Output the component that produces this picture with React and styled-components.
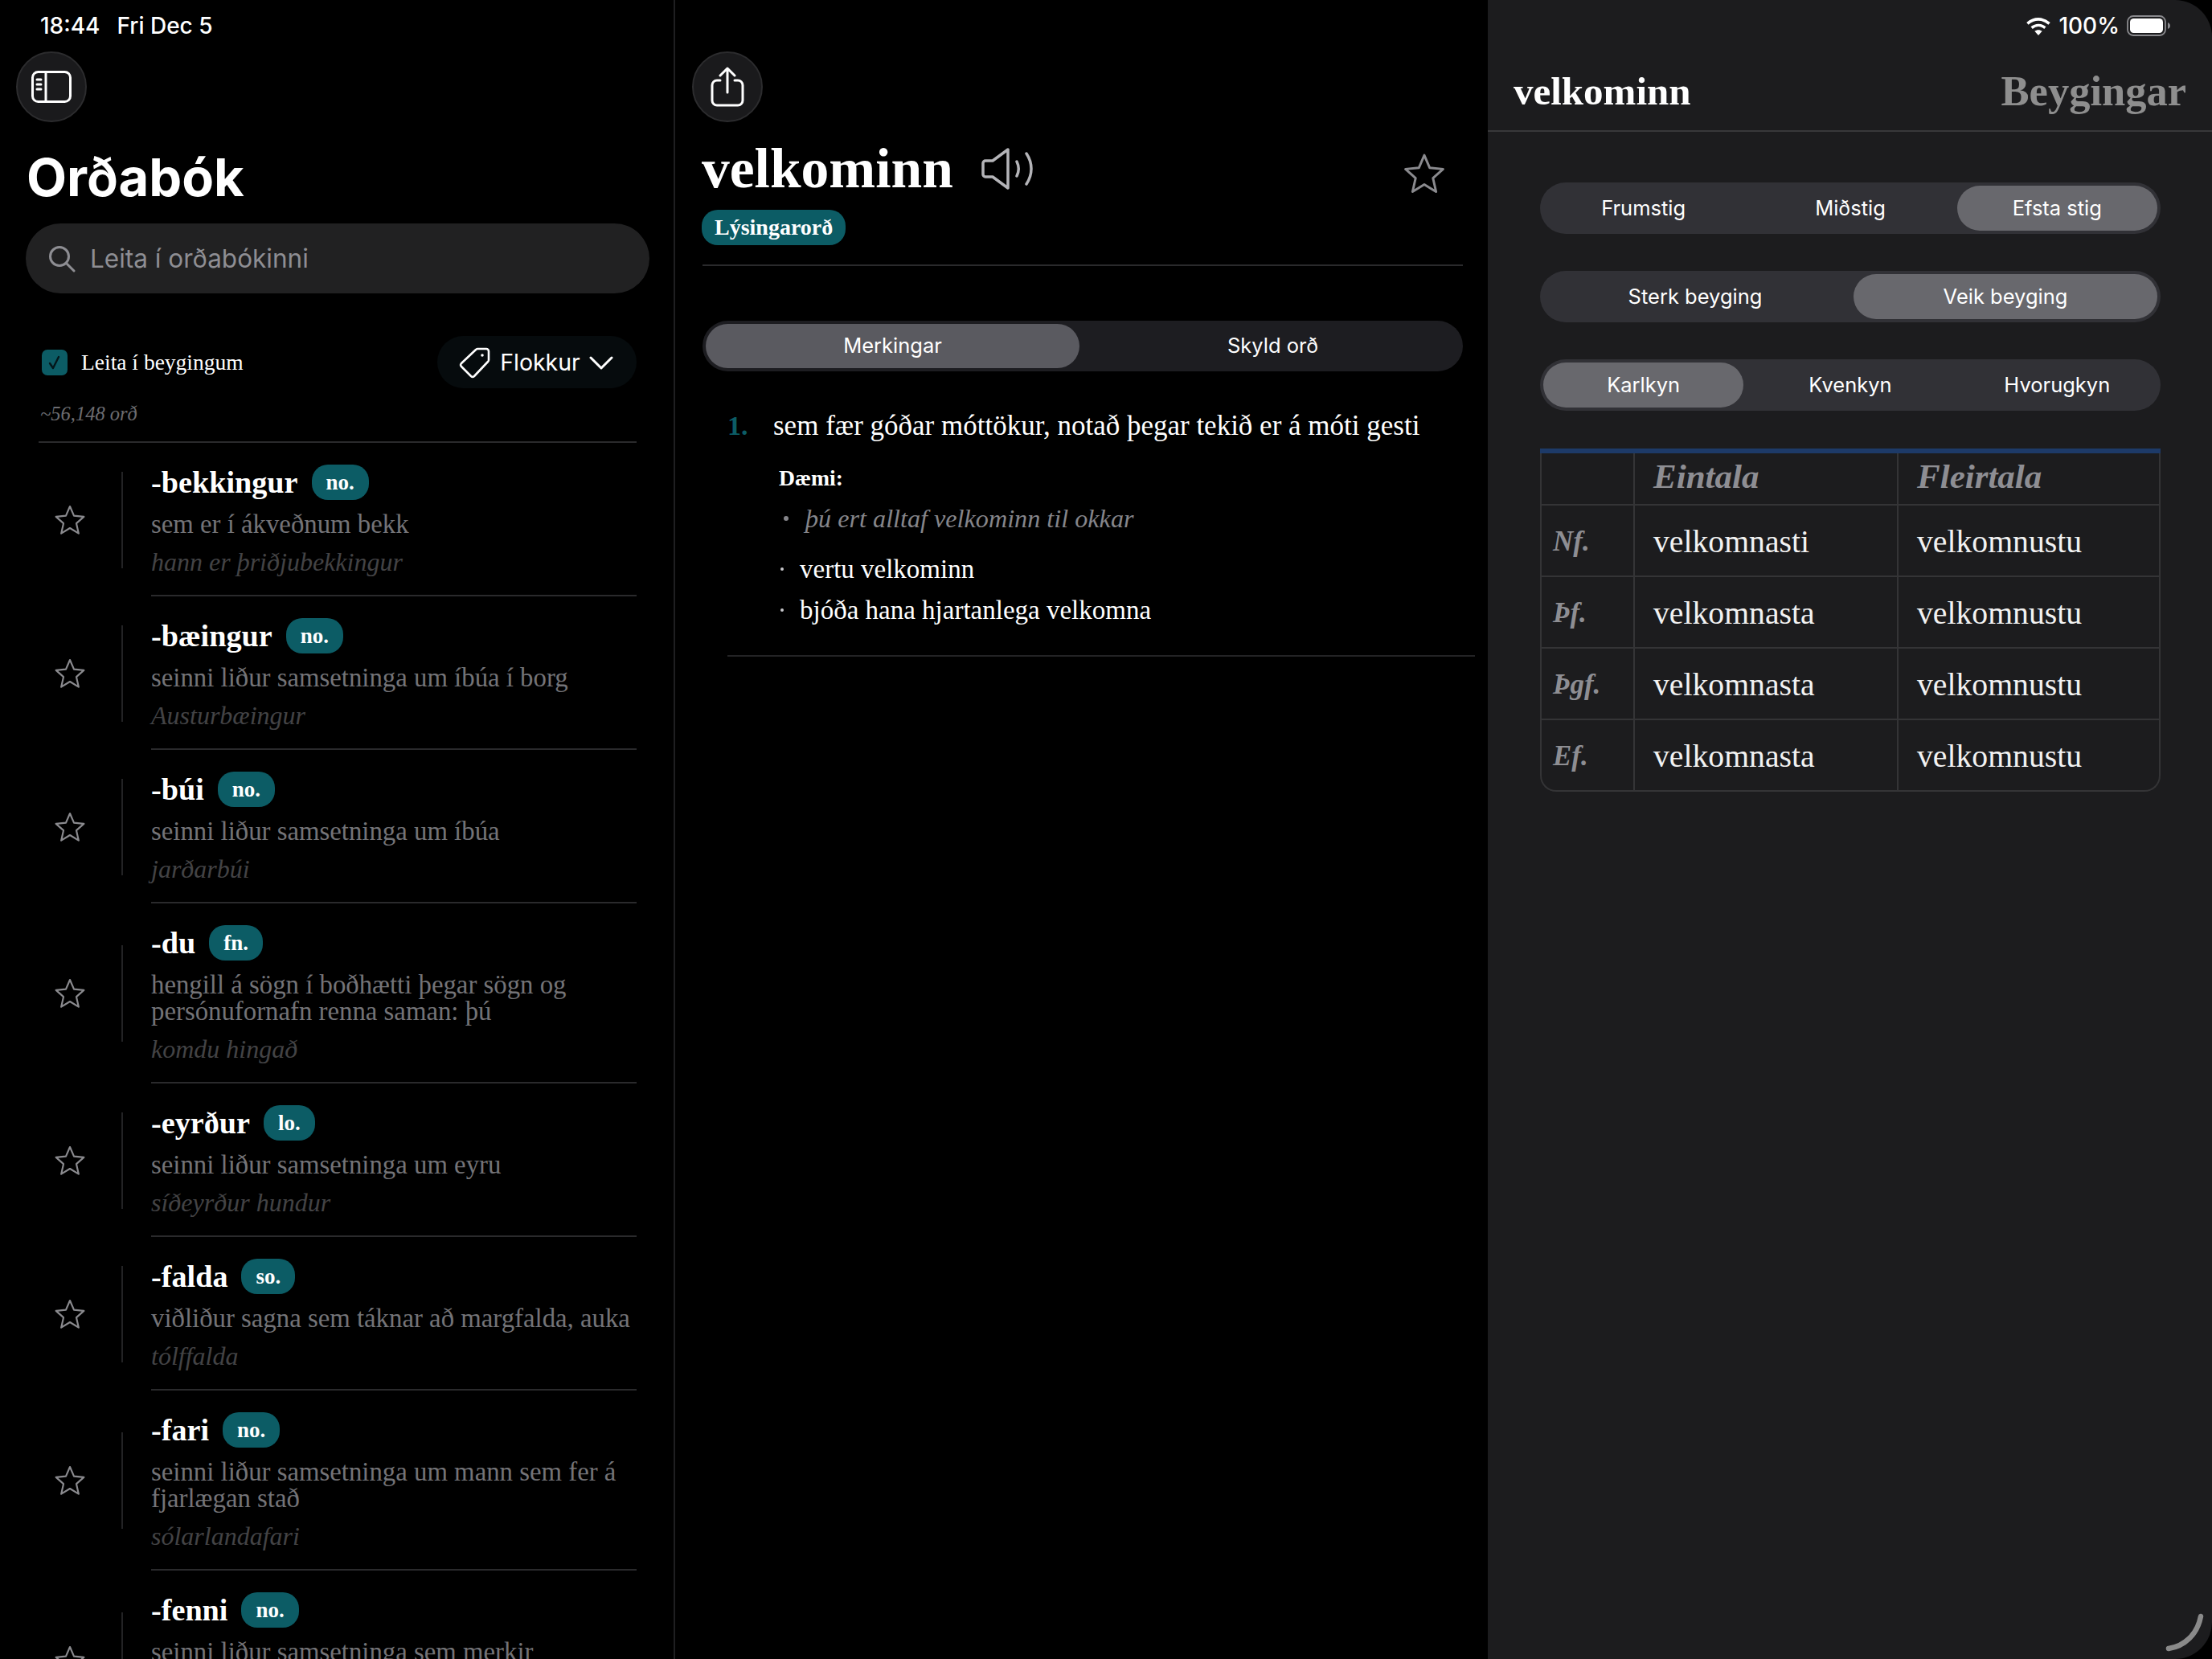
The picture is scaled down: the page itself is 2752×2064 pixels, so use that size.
import React from 'react';
import styled, { createGlobalStyle } from 'styled-components';

const SANS = '"Inter", "Roboto", sans-serif';
const SERIF = '"Liberation Serif", "Times New Roman", serif';
const TEAL = '#0c5c65';

const GlobalStyle = createGlobalStyle`
  html, body {
    margin: 0;
    background: #000;
  }
  * {
    box-sizing: border-box;
  }
`;

const words = [
  { word: '-bekkingur', cls: 'no.', def: 'sem er í ákveðnum bekk', ex: 'hann er þriðjubekkingur' },
  { word: '-bæingur', cls: 'no.', def: 'seinni liður samsetninga um íbúa í borg', ex: 'Austurbæingur' },
  { word: '-búi', cls: 'no.', def: 'seinni liður samsetninga um íbúa', ex: 'jarðarbúi' },
  { word: '-du', cls: 'fn.', def: 'hengill á sögn í boðhætti þegar sögn og persónufornafn renna saman: þú', ex: 'komdu hingað' },
  { word: '-eyrður', cls: 'lo.', def: 'seinni liður samsetninga um eyru', ex: 'síðeyrður hundur' },
  { word: '-falda', cls: 'so.', def: 'viðliður sagna sem táknar að margfalda, auka', ex: 'tólffalda' },
  { word: '-fari', cls: 'no.', def: 'seinni liður samsetninga um mann sem fer á fjarlægan stað', ex: 'sólarlandafari' },
  { word: '-fenni', cls: 'no.', def: 'seinni liður samsetninga sem merkir', tall: true },
];

const forms = [
  ['Nf.', 'velkomnasti', 'velkomnustu'],
  ['Þf.', 'velkomnasta', 'velkomnustu'],
  ['Þgf.', 'velkomnasta', 'velkomnustu'],
  ['Ef.', 'velkomnasta', 'velkomnustu'],
];

const StarIcon = ({ size = 40, color = '#8a8a8e' }) => (
  <svg width={size} height={size} viewBox="0 0 24 24" fill="none" stroke={color} strokeWidth="1.3" strokeLinejoin="round">
    <path d="M12 1.8l3 7 7.4.7-5.6 5 1.7 7.5L12 18l-6.5 4 1.7-7.5-5.6-5L9 8.800z" />
  </svg>
);

const SidebarIcon = () => (
  <svg width="50" height="40" viewBox="0 0 50 40" fill="none" stroke="#fff" strokeWidth="3" strokeLinecap="round">
    <rect x="1.500" y="1.500" width="47" height="37" rx="7" />
    <path d="M18 2v36M7 11h5M7 17h5M7 23h5" />
  </svg>
);

const ShareIcon = () => (
  <svg width="42" height="50" viewBox="0 0 42 50" fill="none" stroke="#fff" strokeWidth="3" strokeLinecap="round" strokeLinejoin="round">
    <path d="M12 17H8a6 6 0 0 0-6 6v19a6 6 0 0 0 6 6h26a6 6 0 0 0 6-6V23a6 6 0 0 0-6-6h-4" />
    <path d="M21 32V3M12 11l9-9 9 9" />
  </svg>
);

const SpeakerIcon = () => (
  <svg width="68" height="52" viewBox="0 0 66 52" fill="none" stroke="#b4b4b8" strokeWidth="3.500" strokeLinecap="round" strokeLinejoin="round">
    <path d="M5 16h9L33 2v48L14 36H5a3 3 0 0 1-3-3V19a3 3 0 0 1 3-3z" />
    <path d="M44 17c3 6 3 12 0 18M56 7c8 12 8 26 0 38" />
  </svg>
);

const SearchIcon = () => (
  <svg width="34" height="34" viewBox="0 0 34 34" fill="none" stroke="#8e8e93" strokeWidth="3" strokeLinecap="round">
    <circle cx="14" cy="14" r="11.500" />
    <path d="M22.500 22.500L32 32" />
  </svg>
);

const TagIcon = () => (
  <svg width="40" height="40" viewBox="0 0 40 40" fill="none" stroke="#fff" strokeWidth="2.600" strokeLinejoin="round">
    <path d="M23 3h11a3 3 0 0 1 3 3v11a3 3 0 0 1-1 2L19 37a3 3 0 0 1-4 0L3 25a3 3 0 0 1 0-4L21 4a3 3 0 0 1 2-1z" />
    <circle cx="29" cy="11" r="1.800" fill="#fff" stroke="none" />
  </svg>
);

const ChevronIcon = () => (
  <svg width="30" height="18" viewBox="0 0 30 18" fill="none" stroke="#fff" strokeWidth="3" strokeLinecap="round" strokeLinejoin="round">
    <path d="M2 3l13 13L28 3" />
  </svg>
);

const CheckIcon = () => (
  <svg width="20" height="20" viewBox="0 0 20 20" fill="none" stroke="#04161a" strokeWidth="2.400" strokeLinecap="round" strokeLinejoin="round">
    <path d="M4 11l4 6L15 3" />
  </svg>
);

const WifiIcon = () => (
  <svg width="32" height="23" viewBox="0 0 30 22" fill="none" stroke="#fff" strokeWidth="3.400">
    <path d="M2 8c8-7 18-7 26 0M7 13c5-4 11-4 16 0" />
    <path d="M15 22l-4.500-5c2.700-2 6.300-2 9 0z" fill="#fff" stroke="none" />
  </svg>
);

const BatteryIcon = () => (
  <svg width="54" height="26" viewBox="0 0 54 26">
    <rect x="1" y="1" width="47" height="24" rx="7" fill="none" stroke="#8a8a8e" strokeWidth="1.800" />
    <rect x="4" y="4" width="41" height="18" rx="4.500" fill="#fff" />
    <path d="M51 9c2 1 3 2 3 4s-1 3-3 4z" fill="#8a8a8e" />
  </svg>
);

const Page = styled.div`
  display: flex;
  width: 2752px;
  height: 2064px;
  overflow: hidden;
  background: #000;
  color: #fff;
`;

const Sidebar = styled.aside`
  width: 840px;
  flex-shrink: 0;
  overflow: hidden;
  border-right: 2px solid #1f1f21;
`;

const StatusLeft = styled.div`
  display: flex;
  align-items: center;
  gap: 21px;
  height: 64px;
  padding-left: 50px;
  font: 500 28px ${SANS};
  white-space: pre;
`;

const RoundButton = styled.button`
  display: flex;
  align-items: center;
  justify-content: center;
  width: 88px;
  height: 88px;
  padding: 0;
  border: 2px solid #2c2c2e;
  border-radius: 50%;
  background: #1a1a1c;
`;

const SidebarTop = styled.div`
  padding-left: 20px;
`;

const AppTitle = styled.h1`
  margin: 34px 0 0 33px;
  font: 700 65px/70px ${SANS};
  color: #fff;
`;

const SearchBar = styled.div`
  display: flex;
  align-items: center;
  gap: 18px;
  height: 87px;
  margin: 22px 30px 0 32px;
  padding-left: 28px;
  border-radius: 44px;
  background: #212122;
  font: 400 31.500px ${SANS};
  color: #8e8e93;
`;

const FilterRow = styled.div`
  display: flex;
  align-items: center;
  justify-content: space-between;
  height: 65px;
  margin: 53px 46px 0 52px;
`;

const CheckLabel = styled.label`
  display: flex;
  align-items: center;
  gap: 17px;
  font: 400 27.500px ${SERIF};
`;

const CheckBox = styled.span`
  display: flex;
  align-items: center;
  justify-content: center;
  width: 32px;
  height: 32px;
  border-radius: 7px;
  background: ${TEAL};
`;

const CategoryButton = styled.button`
  display: flex;
  align-items: center;
  justify-content: center;
  gap: 11px;
  width: 248px;
  height: 65px;
  padding: 0 2px 0 0;
  border: none;
  border-radius: 33px;
  background: #060b0d;
  color: #fff;
  font: 400 28.500px ${SANS};
`;

const WordCount = styled.div`
  margin: 17px 0 0 50px;
  font: italic 400 24.500px/30px ${SERIF};
  color: #6c6c70;
`;

const WordList = styled.ul`
  margin: 19px 46px 0 48px;
  padding: 0;
  list-style: none;
  border-top: 2px solid #2a2a2c;
`;

const WordRow = styled.li`
  display: flex;
  align-items: center;
  min-height: ${(p) => (p.$tall ? '224px' : '189px')};
`;

const StarCell = styled.div`
  display: flex;
  flex-shrink: 0;
  justify-content: center;
  width: 78px;
`;

const RowRule = styled.span`
  flex-shrink: 0;
  width: 2px;
  height: 120px;
  margin-left: 25px;
  background: #232325;
`;

const WordBody = styled.div`
  flex: 1;
  align-self: stretch;
  min-width: 0;
  margin-left: 35px;
  padding: 29px 0 24px;
  border-bottom: ${(p) => (p.$last ? 'none' : '2px solid #2a2a2c')};
`;

const WordHead = styled.div`
  display: flex;
  align-items: center;
  gap: 17px;
  height: 40px;
`;

const Word = styled.span`
  font: 700 38.200px/40px ${SERIF};
  color: #fff;
`;

const ClassBadge = styled.span`
  display: inline-flex;
  align-items: center;
  justify-content: center;
  height: 44px;
  padding: 0 18px;
  border-radius: 20px;
  background: ${TEAL};
  color: #fff;
  font: 700 27px ${SERIF};
`;

const Definition = styled.p`
  margin: 16px 0 0;
  font: 400 32.800px/33px ${SERIF};
  color: #737377;
`;

const Usage = styled.p`
  margin: 14px 0 0;
  font: italic 400 32px/33px ${SERIF};
  color: #434345;
`;

const Detail = styled.main`
  flex: 1;
  min-width: 0;
  padding: 64px 31px 0 34px;
`;

const DetailTop = styled.div`
  margin-left: -13px;
`;

const HeadRow = styled.div`
  display: flex;
  align-items: center;
  height: 70px;
  margin: 23px 0 0 -1px;
`;

const HeadWord = styled.h2`
  margin: 0 34px 0 0;
  font: 700 69.500px/70px ${SERIF};
  color: #fff;
`;

const StarButton = styled.span`
  display: flex;
  margin: 12px 21px 0 auto;
`;

const DetailBadge = styled(ClassBadge)`
  margin: 16px 0 0 -1px;
  padding: 0 16px;
  font-size: 28px;
`;

const Rule = styled.hr`
  height: 2px;
  margin: 24px 0 0;
  border: none;
  background: #2a2a2c;
`;

const Segments = styled.div`
  display: flex;
  gap: 8px;
  height: ${(p) => p.$height}px;
  margin-top: ${(p) => p.$top}px;
  padding: 4px;
  border-radius: ${(p) => p.$height / 2}px;
  background: ${(p) => p.$track};
`;

const SegmentTab = styled.div`
  flex: 1;
  display: flex;
  align-items: center;
  justify-content: center;
  padding-bottom: 2px;
  border-radius: 28px;
  background: ${(p) => (p.$active ? p.$thumb : 'transparent')};
  font: 400 25.500px ${SANS};
  color: #fff;
`;

const Sense = styled.section`
  margin: 48px -15px 0 31px;
`;

const SenseLine = styled.div`
  display: flex;
  align-items: center;
  height: 40px;
`;

const SenseNumber = styled.span`
  width: 57px;
  font: 700 34px/40px ${SERIF};
  color: ${TEAL};
`;

const SenseText = styled.span`
  font: 400 35px/40px ${SERIF};
  white-space: nowrap;
`;

const ExampleLabel = styled.div`
  margin: 30px 0 0 64px;
  font: 700 27.700px/30px ${SERIF};
`;

const ExampleLine = styled.div`
  display: flex;
  align-items: center;
  gap: 21px;
  height: 36px;
  margin: 17px 0 0 70px;
  font: italic 400 32.200px/36px ${SERIF};
  color: #85858a;
`;

const Dot = styled.span`
  width: ${(p) => p.$size}px;
  height: ${(p) => p.$size}px;
  border-radius: 50%;
  background: ${(p) => p.$color};
`;

const RelatedList = styled.ul`
  display: flex;
  flex-direction: column;
  gap: 15px;
  margin: 27px 0 0 66px;
  padding: 0;
  list-style: none;
`;

const RelatedItem = styled.li`
  display: flex;
  align-items: center;
  gap: 20px;
  height: 36px;
  font: 400 33px/36px ${SERIF};
`;

const SenseRule = styled.hr`
  height: 2px;
  margin: 38px 0 0;
  border: none;
  background: #232325;
`;

const Forms = styled.aside`
  position: relative;
  width: 901px;
  flex-shrink: 0;
  border-radius: 0 46px 46px 0;
  background: #1c1c1e;
`;

const StatusRight = styled.div`
  display: flex;
  align-items: center;
  justify-content: flex-end;
  gap: 9px;
  height: 64px;
  padding-right: 52px;
  font: 500 28px ${SANS};
`;

const FormsHeader = styled.header`
  display: flex;
  align-items: center;
  justify-content: space-between;
  height: 100px;
  padding: 0 32px;
  border-bottom: 2px solid #38383a;
`;

const FormsWord = styled.span`
  font: 700 49px ${SERIF};
`;

const FormsTitle = styled.span`
  font: 700 52.500px ${SERIF};
  color: #8e8e8e;
`;

const FormsBody = styled.div`
  padding: 17px 64px 0 65px;
`;

const TableBar = styled.div`
  height: 6px;
  margin-top: 47px;
  background: #1d3a68;
`;

const TableFrame = styled.div`
  overflow: hidden;
  border: 2px solid #343436;
  border-top: none;
  border-radius: 0 0 20px 20px;
`;

const Table = styled.table`
  width: 100%;
  table-layout: fixed;
  border-collapse: separate;
  border-spacing: 0;
`;

const HeadCell = styled.th`
  height: 65px;
  padding: 0 0 7px 23px;
  border-right: 2px solid #343436;
  border-bottom: 2px solid #343436;
  text-align: left;
  font: italic 700 43px ${SERIF};
  color: #8e8e93;
  &:last-child {
    border-right: none;
  }
`;

const CaseCell = styled.th`
  height: 89px;
  padding: 2px 0 0 14px;
  border-right: 2px solid #343436;
  border-bottom: 2px solid #343436;
  text-align: left;
  font: italic 700 35px ${SERIF};
  color: #8e8e93;
  tr:last-child & {
    border-bottom: none;
    height: 87px;
  }
`;

const FormCell = styled.td`
  padding: 2px 0 0 23px;
  border-right: 2px solid #343436;
  border-bottom: 2px solid #343436;
  font: 400 39.700px ${SERIF};
  color: #f2f2f2;
  &:last-child {
    border-right: none;
  }
  tr:last-child & {
    border-bottom: none;
  }
`;

const CornerMark = styled.svg`
  position: absolute;
  right: 8px;
  bottom: 8px;
`;

export default function App() {
  return (
    <Page>
      <GlobalStyle />
      <Sidebar>
        <StatusLeft>
          <span>18:44</span>
          <span>Fri Dec 5</span>
        </StatusLeft>
        <SidebarTop>
          <RoundButton>
            <SidebarIcon />
          </RoundButton>
        </SidebarTop>
        <AppTitle>Orðabók</AppTitle>
        <SearchBar>
          <SearchIcon />
          <span>Leita í orðabókinni</span>
        </SearchBar>
        <FilterRow>
          <CheckLabel>
            <CheckBox>
              <CheckIcon />
            </CheckBox>
            Leita í beygingum
          </CheckLabel>
          <CategoryButton>
            <TagIcon />
            Flokkur
            <ChevronIcon />
          </CategoryButton>
        </FilterRow>
        <WordCount>~56,148 orð</WordCount>
        <WordList>
          {words.map((w) => (
            <WordRow key={w.word} $tall={w.tall}>
              <StarCell>
                <StarIcon />
              </StarCell>
              <RowRule />
              <WordBody $last={w.tall}>
                <WordHead>
                  <Word>{w.word}</Word>
                  <ClassBadge>{w.cls}</ClassBadge>
                </WordHead>
                <Definition>{w.def}</Definition>
                {w.ex && <Usage>{w.ex}</Usage>}
              </WordBody>
            </WordRow>
          ))}
        </WordList>
      </Sidebar>

      <Detail>
        <DetailTop>
          <RoundButton>
            <ShareIcon />
          </RoundButton>
        </DetailTop>
        <HeadRow>
          <HeadWord>velkominn</HeadWord>
          <SpeakerIcon />
          <StarButton>
            <StarIcon size={54} />
          </StarButton>
        </HeadRow>
        <DetailBadge>Lýsingarorð</DetailBadge>
        <Rule />
        <Segments $height={63} $top={68} $track="#1d1d21">
          <SegmentTab $active $thumb="#5a5a60">Merkingar</SegmentTab>
          <SegmentTab>Skyld orð</SegmentTab>
        </Segments>
        <Sense>
          <SenseLine>
            <SenseNumber>1.</SenseNumber>
            <SenseText>sem fær góðar móttökur, notað þegar tekið er á móti gesti</SenseText>
          </SenseLine>
          <ExampleLabel>Dæmi:</ExampleLabel>
          <ExampleLine>
            <Dot $size={6} $color="#85858a" />
            þú ert alltaf velkominn til okkar
          </ExampleLine>
          <RelatedList>
            <RelatedItem>
              <Dot $size={4} $color="#c8c8cc" />
              vertu velkominn
            </RelatedItem>
            <RelatedItem>
              <Dot $size={4} $color="#c8c8cc" />
              bjóða hana hjartanlega velkomna
            </RelatedItem>
          </RelatedList>
          <SenseRule />
        </Sense>
      </Detail>

      <Forms>
        <StatusRight>
          <WifiIcon />
          <span>100%</span>
          <BatteryIcon />
        </StatusRight>
        <FormsHeader>
          <FormsWord>velkominn</FormsWord>
          <FormsTitle>Beygingar</FormsTitle>
        </FormsHeader>
        <FormsBody>
          <Segments $height={64} $top={46} $track="#313136">
            <SegmentTab>Frumstig</SegmentTab>
            <SegmentTab>Miðstig</SegmentTab>
            <SegmentTab $active $thumb="#68686d">Efsta stig</SegmentTab>
          </Segments>
          <Segments $height={64} $top={46} $track="#313136">
            <SegmentTab>Sterk beyging</SegmentTab>
            <SegmentTab $active $thumb="#68686d">Veik beyging</SegmentTab>
          </Segments>
          <Segments $height={64} $top={46} $track="#313136">
            <SegmentTab $active $thumb="#68686d">Karlkyn</SegmentTab>
            <SegmentTab>Kvenkyn</SegmentTab>
            <SegmentTab>Hvorugkyn</SegmentTab>
          </Segments>
          <TableBar />
          <TableFrame>
            <Table>
              <colgroup>
                <col width="116" />
                <col width="328" />
                <col />
              </colgroup>
              <thead>
                <tr>
                  <HeadCell />
                  <HeadCell>Eintala</HeadCell>
                  <HeadCell>Fleirtala</HeadCell>
                </tr>
              </thead>
              <tbody>
                {forms.map((row) => (
                  <tr key={row[0]}>
                    <CaseCell>{row[0]}</CaseCell>
                    <FormCell>{row[1]}</FormCell>
                    <FormCell>{row[2]}</FormCell>
                  </tr>
                ))}
              </tbody>
            </Table>
          </TableFrame>
        </FormsBody>
        <CornerMark width="50" height="50" viewBox="0 0 50 50" fill="none" stroke="#8a8a8a" strokeWidth="6.500" strokeLinecap="round">
          <path d="M4 45c20-3 36-18 40-40" />
        </CornerMark>
      </Forms>
    </Page>
  );
}
